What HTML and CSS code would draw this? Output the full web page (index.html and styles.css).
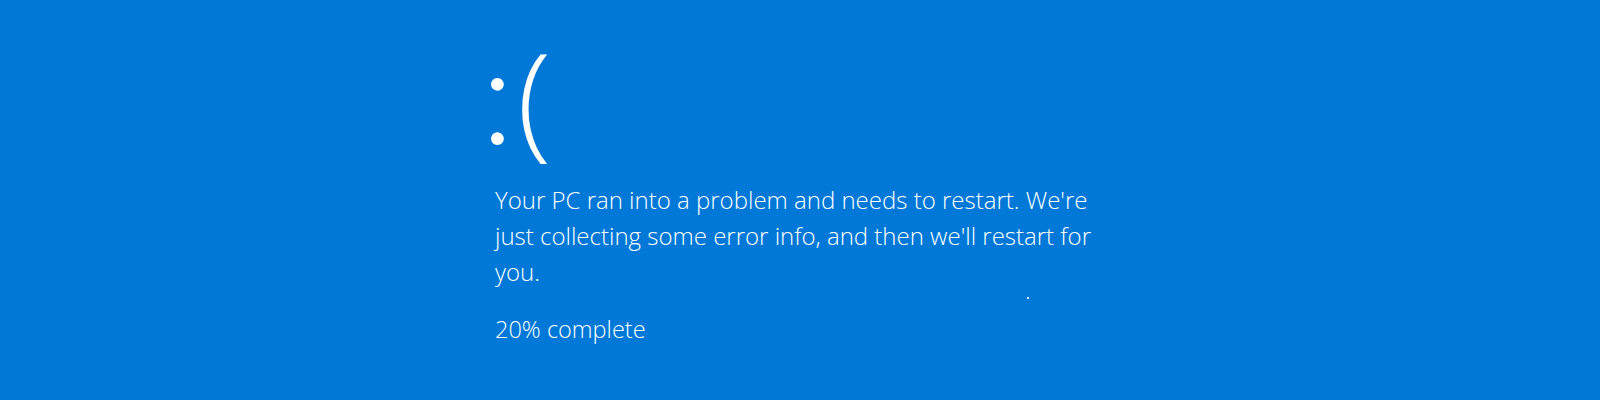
FILE: index.html
```html
<!DOCTYPE html>
<html lang="en">
<head>
<meta charset="utf-8">
<title>Your PC ran into a problem</title>
<link rel="stylesheet" href="styles.css">
</head>
<body>
<main class="screen">
  <div class="content">
    <div class="sad"><span class="sad-eyes">:</span><span class="sad-mouth">(</span></div>
    <p class="message">Your PC ran into a problem and needs to restart. We're just collecting some error info, and then we'll restart for you.</p>
    <p class="progress">20% complete</p>
  </div>
  <span class="speck"></span>
</main>
</body>
</html>
```
FILE: styles.css
```css
html, body {
  margin: 0;
  padding: 0;
  background: #0078d7;
}
.screen {
  position: relative;
  height: 400px;
  background: #0078d7;
  color: #ffffff;
  font-family: "Open Sans", "Noto Sans", "Liberation Sans", sans-serif;
  font-weight: 300;
  overflow: hidden;
}
.content {
  width: 610px;
  margin: 0 auto;
  padding-top: 20px;
}
.sad {
  font-size: 126px;
  line-height: 150px;
  height: 150px;
  margin-bottom: 12px;
  margin-left: -14px;
  white-space: nowrap;
}
.sad-eyes {
  font-family: Lato, "Open Sans", sans-serif;
  font-size: 137px;
  line-height: 0;
  font-weight: 300;
  margin-right: 3px;
}
.sad-mouth {
  font-weight: 360;
}
.message {
  margin: 0;
  font-size: 24px;
  line-height: 36px;
}
.progress {
  margin: 21px 0 0;
  font-size: 23.5px;
  line-height: 36px;
}
.speck {
  position: absolute;
  left: 1027px;
  top: 297px;
  width: 2px;
  height: 2px;
  background: rgba(255, 255, 255, 0.85);
}
```
